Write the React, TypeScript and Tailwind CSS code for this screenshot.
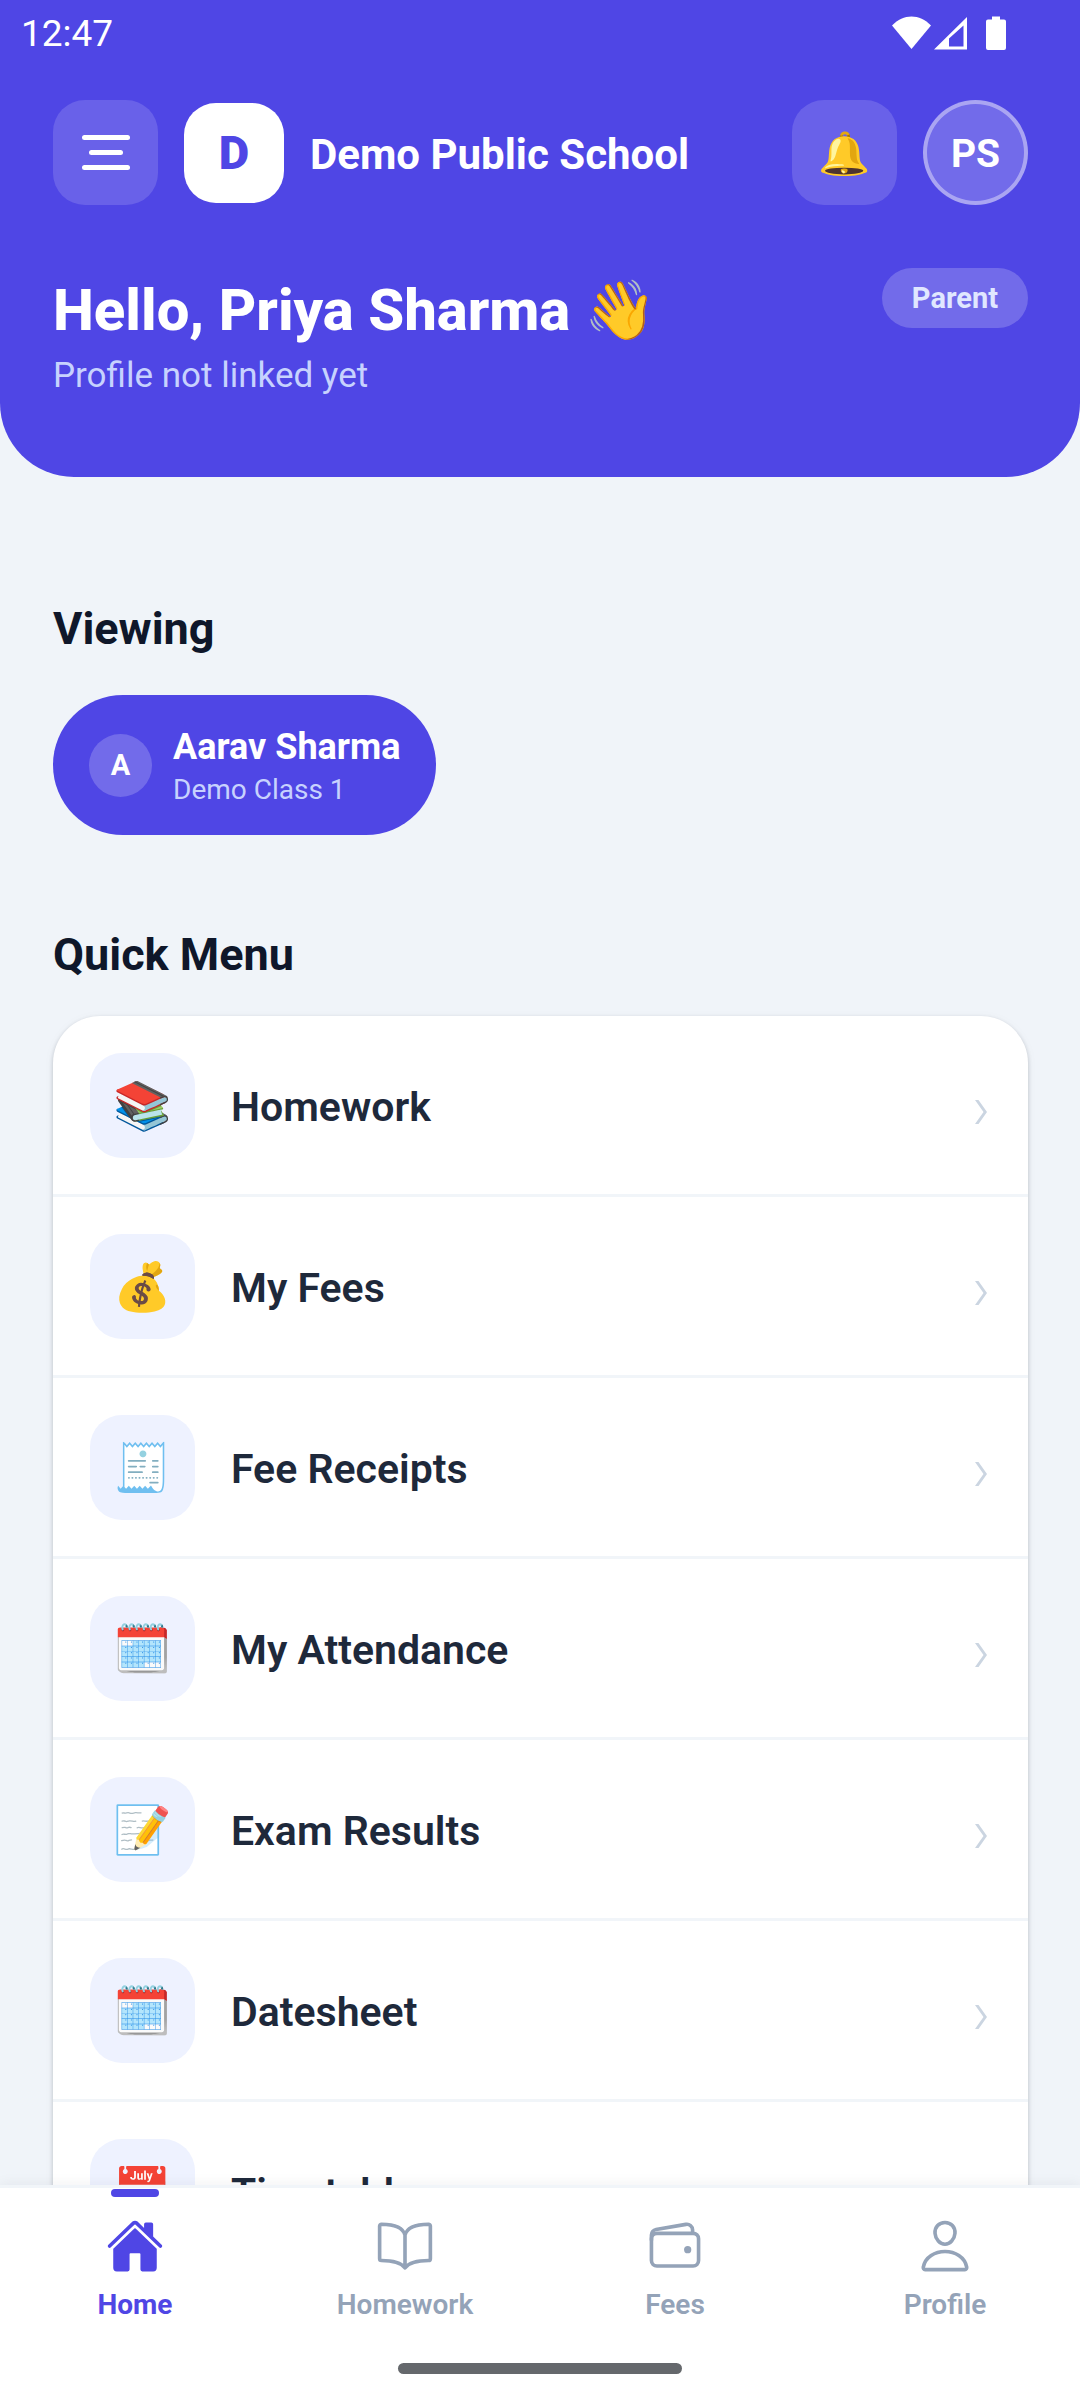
import type { ReactNode } from 'react'
import { IoBookOutline, IoHome, IoPersonOutline, IoWalletOutline } from 'react-icons/io5'

const menuItems = [
  { icon: '📚', label: 'Homework' },
  { icon: '💰', label: 'My Fees' },
  { icon: '🧾', label: 'Fee Receipts' },
  { icon: '🗓️', label: 'My Attendance' },
  { icon: '📝', label: 'Exam Results' },
  { icon: '🗓️', label: 'Datesheet' },
  { icon: '📅', label: 'Timetable' },
]

const tabs = [
  { label: 'Home', Icon: IoHome, active: true },
  { label: 'Homework', Icon: IoBookOutline, active: false },
  { label: 'Fees', Icon: IoWalletOutline, active: false },
  { label: 'Profile', Icon: IoPersonOutline, active: false },
]

function StatusBar() {
  return (
    <div className="flex items-center justify-between pt-3 pr-[74px] pl-[21px]">
      <span className="pt-0.5 text-[37px] leading-10">12:47</span>
      <svg className="h-[34px] w-[114px]" viewBox="0 0 114 34" fill="currentColor" aria-hidden="true">
        <path d="M0 9.5C11.500-2.500 27.500-2.500 39 9.500L19.500 33Z" />
        <path fillRule="evenodd" d="M42 33.500 75 1V33.500ZM57 22.500V30.500H71.500V9.500Z" />
        <path d="M100 0.500h8v3h4a2 2 0 0 1 2 2V32a2 2 0 0 1-2 2H96a2 2 0 0 1-2-2V5.500a2 2 0 0 1 2-2h4Z" />
      </svg>
    </div>
  )
}

function Chevron() {
  return (
    <svg className="mt-3 mr-1 h-6 w-3 shrink-0" viewBox="0 0 12 24" fill="#cbd5e1" aria-hidden="true">
      <path d="M0 0H3.500L12 12 3.500 24H0L8.500 12Z" />
    </svg>
  )
}

function Header() {
  return (
    <header className="rounded-b-[74px] bg-[#4f46e5] pb-[78px] text-white">
      <StatusBar />
      <div className="mt-[46px] flex items-center gap-[26px] pr-[52px] pl-[53px]">
        <button
          type="button"
          aria-label="Open menu"
          className="flex size-[105px] shrink-0 flex-col items-center justify-center gap-[10px] rounded-[32px] bg-white/15"
        >
          <span className="h-[5px] w-12 rounded-full bg-white" />
          <span className="h-[5px] w-[34px] rounded-full bg-white" />
          <span className="h-[5px] w-12 rounded-full bg-white" />
        </button>
        <div className="flex size-[100px] shrink-0 items-center justify-center rounded-[32px] bg-white pt-0.5 text-[47px] font-black text-[#4f46e5]">
          D
        </div>
        <p className="grow truncate pt-1 text-[42px] leading-[50px] font-bold">Demo Public School</p>
        <button
          type="button"
          aria-label="Notifications"
          className="flex size-[105px] shrink-0 items-center justify-center rounded-[32px] bg-white/15 pt-0.5 text-[42px]"
        >
          🔔
        </button>
        <button
          type="button"
          aria-label="Account"
          className="flex size-[105px] shrink-0 items-center justify-center rounded-full border-4 border-white/40 bg-white/20 pt-1 text-[39px] font-bold"
        >
          PS
        </button>
      </div>
      <div className="mt-[63px] flex items-start justify-between pr-[52px] pl-[53px]">
        <div>
          <h1 className="text-[58px] leading-[84px] font-extrabold">Hello, Priya Sharma 👋</h1>
          <p className="text-[35px] leading-[47px] text-[#c7d2fe]">Profile not linked yet</p>
        </div>
        <span className="rounded-full bg-white/20 px-[30px] text-[29px] leading-[60px] font-bold text-[#e0e7ff]">
          Parent
        </span>
      </div>
    </header>
  )
}

function SectionTitle({ children }: { children: ReactNode }) {
  return <h2 className="text-[45px] leading-[52px] font-bold text-[#0f172a]">{children}</h2>
}

export default function App() {
  return (
    <div className="flex h-screen flex-col overflow-hidden bg-[#f0f4f9] font-['Roboto','Noto_Color_Emoji',sans-serif]">
      <Header />
      <main className="min-h-0 grow overflow-y-auto pt-[126px] pr-[52px] pl-[53px] [scrollbar-width:none]">
        <SectionTitle>Viewing</SectionTitle>
        <button
          type="button"
          className="mt-[40px] flex h-[140px] items-center gap-[21px] rounded-full bg-[#4f46e5] px-9 text-left text-white"
        >
          <span className="flex size-[63px] items-center justify-center rounded-full bg-white/20 pt-0.5 text-[29px] font-bold">
            A
          </span>
          <span className="flex flex-col pt-1">
            <span className="text-[36px] leading-[46px] font-bold">Aarav Sharma</span>
            <span className="text-[28px] leading-[40px] text-[#c7d2fe]">Demo Class 1</span>
          </span>
        </button>

        <div className="mt-[94px]">
          <SectionTitle>Quick Menu</SectionTitle>
        </div>
        <ul className="mt-[35px] overflow-hidden rounded-[47px] bg-white shadow-[0_2px_4px_rgba(15,23,42,0.22),0_2px_12px_rgba(15,23,42,0.04)]">
          {menuItems.map((item) => (
            <li key={item.label} className="border-b-3 border-[#f1f5f9]">
              <button type="button" className="flex w-full items-center gap-9 p-[37px] pb-9 text-left">
                <span className="flex size-[105px] shrink-0 items-center justify-center rounded-[32px] bg-[#eef2ff] pt-0.5 text-[47px]">
                  {item.icon}
                </span>
                <span className="grow pt-0.5 text-[41px] leading-[50px] font-semibold text-[#1e293b]">{item.label}</span>
                <Chevron />
              </button>
            </li>
          ))}
        </ul>
      </main>
      <nav className="relative border-t-3 border-[#f1f5f9] bg-white shadow-[0_-2px_12px_rgba(15,23,42,0.05)]">
        <div className="grid grid-cols-4 pt-px">
          {tabs.map(({ label, Icon, active }) => (
            <a
              key={label}
              href="#"
              aria-current={active ? 'page' : undefined}
              className={
                active
                  ? 'flex flex-col items-center font-bold text-[#4f46e5]'
                  : 'flex flex-col items-center font-semibold text-[#94a3b8]'
              }
            >
              <span className={active ? 'h-2 w-12 rounded-full bg-[#4f46e5]' : 'h-2 w-12'} />
              <Icon className="mt-5 size-[58px]" aria-hidden="true" />
              <span className="mt-3 text-[28px] leading-[36px]">{label}</span>
            </a>
          ))}
        </div>
        <div className="mx-auto mt-[40px] mb-[26px] h-[11px] w-[284px] rounded-full bg-[#65686c]" />
      </nav>
    </div>
  )
}
